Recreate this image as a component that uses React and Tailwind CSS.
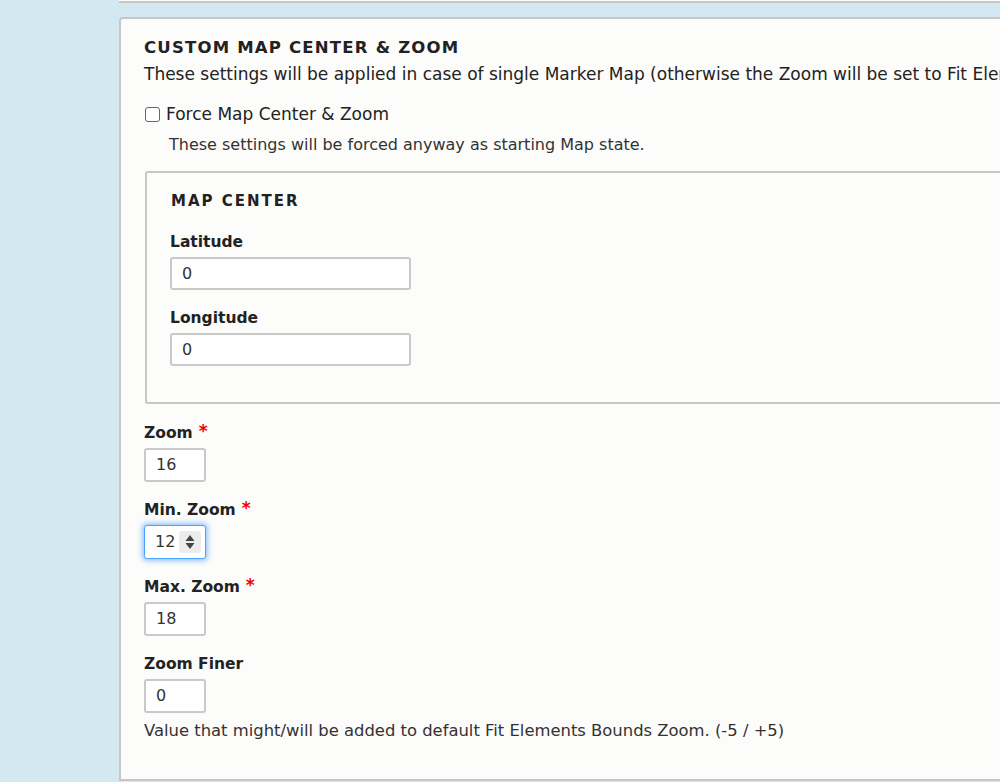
import React, { useState } from 'react'

const font = { fontFamily: '"DejaVu Sans", "Noto Sans", sans-serif' }

const NumberField = ({ label, required, value, focused, onChange }) => (
  <div className="mb-[18px]">
    <label className="flex items-start text-[15.5px] font-bold text-[#222] leading-[20px] mb-[5px]">
      {label}
      {required && <span className="text-[#e00] ml-[6px] text-[17px] leading-[16px]">*</span>}
    </label>
    <div
      className={
        'w-[62px] h-[34px] flex items-center pl-[10px] pr-[4px] bg-white rounded-[3px] text-[16px] text-[#333] ' +
        (focused
          ? 'border border-[#4aa3ff] shadow-[0_0_5px_2px_rgba(80,160,255,0.6)]'
          : 'border-2 border-[#c9c9c9]')
      }
    >
      <input
        type="text"
        value={value}
        onChange={(e) => onChange(e.target.value)}
        className="w-full bg-transparent outline-none"
      />
      {focused && (
        <span className="flex flex-col items-center justify-center w-[22px] h-[22px] bg-[#ececec] rounded-[3px] shrink-0">
          <svg width="10" height="16" viewBox="0 0 10 16">
            <path d="M5 1 L9.5 7 H0.5 Z" fill="#444" />
            <path d="M5 15 L9.5 9 H0.5 Z" fill="#444" />
          </svg>
        </span>
      )}
    </div>
  </div>
)

const App = () => {
  const [force, setForce] = useState(false)
  const [lat, setLat] = useState('0')
  const [lng, setLng] = useState('0')
  const [zoom, setZoom] = useState('16')
  const [minZoom, setMinZoom] = useState('12')
  const [maxZoom, setMaxZoom] = useState('18')
  const [finer, setFiner] = useState('0')

  return (
    <div className="w-[1000px] h-[782px] bg-[#d4e8f2] overflow-hidden" style={font}>
      {/* previous panel */}
      <div className="ml-[119px] h-[3px] border-b-2 border-[#c6c6c6] bg-[#fcfcfa]" />

      <div className="ml-[119px] mt-[14px] w-[900px] h-[764px] bg-[#fcfcfa] border-2 border-[#c6c6c6] rounded-tl-[4px] pl-[23px] pt-[18px] overflow-hidden">
        <h2 className="text-[16.5px] font-bold tracking-[1.2px] text-[#222] leading-[22px]">CUSTOM MAP CENTER &amp; ZOOM</h2>
        <p className="text-[17px] text-[#222] leading-[22px] mt-[4px] whitespace-nowrap">
          These settings will be applied in case of single Marker Map (otherwise the Zoom will be set to Fit Elements Bounds)
        </p>

        <label className="flex items-center mt-[18px] text-[17px] text-[#222] leading-[22px]">
          <input
            type="checkbox"
            checked={force}
            onChange={(e) => setForce(e.target.checked)}
            className="w-[15px] h-[15px] mr-[6px] ml-[1px] appearance-none border border-[#666] rounded-[3px] bg-white checked:bg-[#4aa3ff]"
          />
          Force Map Center &amp; Zoom
        </label>
        <p className="text-[16px] text-[#333] leading-[20px] mt-[10px] ml-[25px]">
          These settings will be forced anyway as starting Map state.
        </p>

        <fieldset className="mt-[16px] ml-[1px] h-[233px] border-2 border-r-0 border-[#c6c6c6] rounded-l-[3px] pl-[23px] pt-[17px]">
          <h3 className="ml-[1px] text-[15px] font-bold tracking-[2px] text-[#222] leading-[22px]">MAP CENTER</h3>
          <div className="mt-[20px]">
            <label className="block text-[15.5px] font-bold text-[#222] leading-[20px] mb-[5px]">Latitude</label>
            <input
              type="text"
              value={lat}
              onChange={(e) => setLat(e.target.value)}
              className="w-[241px] h-[33px] border-2 border-[#c9c9c9] rounded-[3px] bg-white px-[10px] text-[16px] text-[#333] outline-none"
            />
          </div>
          <div className="mt-[18px]">
            <label className="block text-[15.5px] font-bold text-[#222] leading-[20px] mb-[5px]">Longitude</label>
            <input
              type="text"
              value={lng}
              onChange={(e) => setLng(e.target.value)}
              className="w-[241px] h-[33px] border-2 border-[#c9c9c9] rounded-[3px] bg-white px-[10px] text-[16px] text-[#333] outline-none"
            />
          </div>
        </fieldset>

        <div className="mt-[19px]">
          <NumberField label="Zoom" required value={zoom} onChange={setZoom} />
          <NumberField label="Min. Zoom" required focused value={minZoom} onChange={setMinZoom} />
          <NumberField label="Max. Zoom" required value={maxZoom} onChange={setMaxZoom} />
          <NumberField label="Zoom Finer" value={finer} onChange={setFiner} />
          <p className="-mt-[10px] text-[16.4px] text-[#333] leading-[20px]">
            Value that might/will be added to default Fit Elements Bounds Zoom. (-5 / +5)
          </p>
        </div>
      </div>
    </div>
  )
}

export default App
